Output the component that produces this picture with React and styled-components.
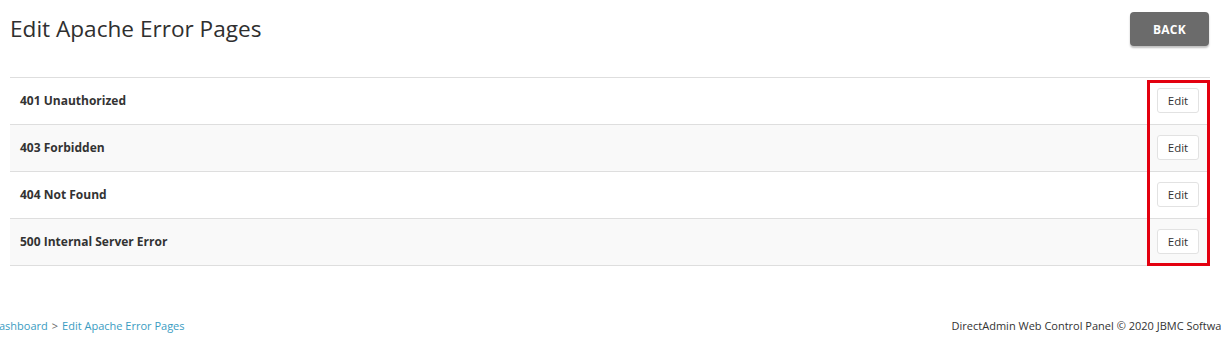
import React from "react";
import styled, { createGlobalStyle } from "styled-components";

const GlobalStyle = createGlobalStyle`
  html, body {
    margin: 0;
    padding: 0;
    background: #fff;
    overflow: hidden;
  }
  body {
    font-family: "Open Sans", "DejaVu Sans", sans-serif;
    color: #333;
  }
`;

const pages = [
  { code: 401, name: "Unauthorized" },
  { code: 403, name: "Forbidden" },
  { code: 404, name: "Not Found" },
  { code: 500, name: "Internal Server Error" },
];

const App = () => {
  return (
    <>
      <GlobalStyle />
      <Page>
        <Header>
          <Title>Edit Apache Error Pages</Title>
          <BackButton>BACK</BackButton>
        </Header>

        {/* table of error pages */}
        <TableWrap>
          <Table>
            {pages.map((p, i) => (
              <Row key={p.code} striped={i % 2 === 1}>
                <Label>
                  {p.code} {p.name}
                </Label>
                <EditButton>Edit</EditButton>
              </Row>
            ))}
          </Table>
          <Highlight />
        </TableWrap>

        <Footer>
          <Crumbs>
            <Crumb>Dashboard</Crumb>
            <Sep>&gt;</Sep>
            <Crumb>Edit Apache Error Pages</Crumb>
          </Crumbs>
          <Copy>DirectAdmin Web Control Panel © 2020 JBMC Software</Copy>
        </Footer>
      </Page>
    </>
  );
};

const Page = styled.div`
  padding: 12px 11px 0 10px;
`;

const Header = styled.div`
  display: flex;
  align-items: center;
  justify-content: space-between;
  height: 34px;
  margin-bottom: 31px;
`;

const Title = styled.h1`
  margin: 0;
  font-size: 22.6px;
  font-weight: 400;
  color: #2f2f2f;
  line-height: 34px;
`;

const BackButton = styled.button`
  width: 79px;
  height: 34px;
  margin-right: 1px;
  border: none;
  border-radius: 4px;
  background: #6b6b6b;
  box-shadow: 0 2px 2px rgba(0, 0, 0, 0.25);
  color: #fff;
  font-family: inherit;
  font-size: 12px;
  font-weight: 700;
  letter-spacing: 0.3px;
`;

const TableWrap = styled.div`
  position: relative;
`;

const Table = styled.div`
  display: flex;
  flex-direction: column;
  border-top: 1px solid #dedede;
`;

const Row = styled.div`
  display: flex;
  align-items: center;
  justify-content: space-between;
  height: 46px;
  padding: 0 11px 0 10px;
  border-bottom: 1px solid #dedede;
  background: ${(p) => (p.striped ? "#f9f9f9" : "#fff")};
`;

const Label = styled.span`
  font-size: 12px;
  font-weight: 700;
  color: #333;
  margin-top: -1px;
`;

const EditButton = styled.button`
  width: 42px;
  height: 25px;
  padding: 0;
  margin-top: -2px;
  border: 1px solid #e2e2e2;
  border-radius: 3px;
  background: #fff;
  color: #333;
  font-family: inherit;
  font-size: 11.5px;
`;

const Highlight = styled.div`
  position: absolute;
  top: 3px;
  bottom: 0;
  right: 0;
  width: 63px;
  box-sizing: border-box;
  border: 3px solid #e3000f;
  pointer-events: none;
`;

const Footer = styled.div`
  display: flex;
  align-items: center;
  justify-content: space-between;
  margin: 52px -22px 0 -19px;
  font-size: 11px;
`;

const Crumbs = styled.div`
  display: flex;
  gap: 4px;
`;

const Crumb = styled.span`
  color: #3a9cc2;
`;

const Sep = styled.span`
  color: #666;
`;

const Copy = styled.span`
  color: #333;
`;

export default App;
